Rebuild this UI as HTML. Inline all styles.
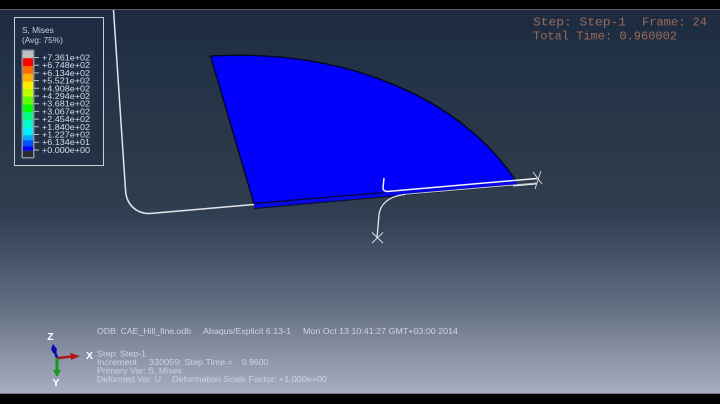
<!DOCTYPE html>
<html><head><meta charset="utf-8"><style>
html,body{margin:0;padding:0;background:#000;width:720px;height:404px;overflow:hidden}
svg{display:block}
text{font-family:"Liberation Sans",sans-serif}
</style></head><body>
<svg width="720" height="404" viewBox="0 0 720 404" xmlns="http://www.w3.org/2000/svg">
<defs>
<linearGradient id="bg" x1="0" y1="10" x2="0" y2="394" gradientUnits="userSpaceOnUse">
<stop offset="0" stop-color="#1d2a40"/>
<stop offset=".14" stop-color="#223247"/>
<stop offset=".36" stop-color="#2b3848"/>
<stop offset=".53" stop-color="#2f3e50"/>
<stop offset=".68" stop-color="#4d5a71"/>
<stop offset=".8" stop-color="#6c7689"/>
<stop offset=".9" stop-color="#8b93a7"/>
<stop offset="1" stop-color="#a8aec0"/>
</linearGradient>
<filter id="b" x="-5%" y="-5%" width="110%" height="110%"><feGaussianBlur stdDeviation="0.35"/></filter>
</defs>
<rect width="720" height="404" fill="#000"/>
<rect y="10" width="720" height="384" fill="url(#bg)"/>
<rect y="9" width="720" height="1" fill="#5a5f66"/>
<rect y="393" width="720" height="1" fill="#777c88"/>

<!-- Part -->
<path d="M210.500 56 Q240 54.500 265 56 C370 62 465 105 516 181 L385 193 L254 204 Z" fill="#0000fb" stroke="#03051a" stroke-width="1.300" stroke-linejoin="round"/>
<path d="M254 203.500 L516 180.500 L517 184.500 L254.500 208.500 Z" fill="#0808e0"/>
<path d="M254 203.500 L383 192.500" stroke="#05062a" stroke-width="1.200" fill="none"/>
<path d="M254.500 208.500 L400 195.500 L515 185" stroke="#0a0f30" stroke-width="1" fill="none"/>

<!-- Left tool -->
<path d="M113.500 10 L125.500 190 C126 204 136 214 150 213.500 L254 204.500" fill="none" stroke="#e2e6ea" stroke-width="1.500"/>
<!-- Punch -->
<path d="M384 178 L383 188 Q383 191 387 191.500 L537 178.500" fill="none" stroke="#f2f4f6" stroke-width="1.500"/>
<path d="M403 194.500 L537 183" fill="none" stroke="#c5cace" stroke-width="1"/>
<path d="M513 186 L536 184" fill="none" stroke="#eef1f4" stroke-width="1"/>
<!-- Lower curve -->
<path d="M405 194.500 C388 196 380 205 379 215 L377 238" fill="none" stroke="#e4e8ea" stroke-width="1.300"/>
<path d="M372 232.500 L383 243 M383 232.500 L372 243" stroke="#dfe3e6" stroke-width="0.900"/>
<path d="M533 172 L542 184 M541 171 L535 189" stroke="#dfe3e6" stroke-width="0.900"/>

<!-- Legend -->
<rect x="14.500" y="17.500" width="89" height="148" fill="#1f2c43" fill-opacity=".55" stroke="#c9ced6" stroke-width="1"/>
<g filter="url(#b)" fill="#c6ccd6" font-size="8.300">
<text x="22" y="33">S, Mises</text>
<text x="22" y="43">(Avg: 75%)</text>
</g>
<rect x="21.500" y="49.500" width="13" height="109" fill="#8b909a"/>
<g>
<rect x="23" y="51" width="10" height="7.300" fill="#c0c0c0"/>
<rect x="23" y="58.300" width="10" height="7.700" fill="#ff0000"/>
<rect x="23" y="66" width="10" height="7.700" fill="#ff6a00"/>
<rect x="23" y="73.700" width="10" height="7.700" fill="#ffae00"/>
<rect x="23" y="81.400" width="10" height="7.700" fill="#ffee00"/>
<rect x="23" y="89.100" width="10" height="7.700" fill="#c0ff00"/>
<rect x="23" y="96.800" width="10" height="7.700" fill="#60ff00"/>
<rect x="23" y="104.500" width="10" height="7.700" fill="#00ff00"/>
<rect x="23" y="112.200" width="10" height="7.700" fill="#00ff80"/>
<rect x="23" y="119.900" width="10" height="7.700" fill="#00ffc8"/>
<rect x="23" y="127.600" width="10" height="7.700" fill="#00f0ff"/>
<rect x="23" y="135.300" width="10" height="5" fill="#00aaff"/>
<rect x="23" y="140.300" width="10" height="6" fill="#0050ff"/>
<rect x="23" y="146.300" width="10" height="4.500" fill="#0000ff"/>
<rect x="23" y="151" width="10" height="6" fill="#2b2b2b"/>
</g>
<path d="M34 57.500H39M34 65.200H39M34 72.900H39M34 80.600H39M34 88.300H39M34 96H39M34 103.700H39M34 111.400H39M34 119.100H39M34 126.800H39M34 134.500H39M34 142.200H39M34 150H39" stroke="#b9bfc9" stroke-width="1"/>
<g filter="url(#b)" fill="#d6dbe4" font-size="8.300">
<text x="42" y="60.500" textLength="48" lengthAdjust="spacingAndGlyphs">+7.361e+02</text>
<text x="42" y="68.200" textLength="48" lengthAdjust="spacingAndGlyphs">+6.748e+02</text>
<text x="42" y="75.900" textLength="48" lengthAdjust="spacingAndGlyphs">+6.134e+02</text>
<text x="42" y="83.600" textLength="48" lengthAdjust="spacingAndGlyphs">+5.521e+02</text>
<text x="42" y="91.300" textLength="48" lengthAdjust="spacingAndGlyphs">+4.908e+02</text>
<text x="42" y="99" textLength="48" lengthAdjust="spacingAndGlyphs">+4.294e+02</text>
<text x="42" y="106.700" textLength="48" lengthAdjust="spacingAndGlyphs">+3.681e+02</text>
<text x="42" y="114.400" textLength="48" lengthAdjust="spacingAndGlyphs">+3.067e+02</text>
<text x="42" y="122.100" textLength="48" lengthAdjust="spacingAndGlyphs">+2.454e+02</text>
<text x="42" y="129.800" textLength="48" lengthAdjust="spacingAndGlyphs">+1.840e+02</text>
<text x="42" y="137.500" textLength="48" lengthAdjust="spacingAndGlyphs">+1.227e+02</text>
<text x="42" y="145.200" textLength="48" lengthAdjust="spacingAndGlyphs">+6.134e+01</text>
<text x="42" y="153" textLength="48" lengthAdjust="spacingAndGlyphs">+0.000e+00</text>
</g>

<!-- Top right status -->
<g filter="url(#b)" fill="#9a6b57">
<text x="533" y="25.500" style="font-family:'Liberation Mono',monospace;font-size:11.500px" textLength="93" lengthAdjust="spacingAndGlyphs">Step: Step-1</text>
<text x="642" y="25.500" style="font-family:'Liberation Mono',monospace;font-size:11.500px" textLength="65" lengthAdjust="spacingAndGlyphs">Frame: 24</text>
<text x="533" y="39.500" style="font-family:'Liberation Mono',monospace;font-size:11.500px" textLength="144" lengthAdjust="spacingAndGlyphs">Total Time: 0.960002</text>
</g>

<!-- Bottom info -->
<g filter="url(#b)" fill="#cfd3df" font-size="8.300">
<text x="97" y="334" textLength="94" lengthAdjust="spacingAndGlyphs">ODB: CAE_Hill_fine.odb</text>
<text x="203" y="334" textLength="88" lengthAdjust="spacingAndGlyphs">Abaqus/Explicit 6.13-1</text>
<text x="303" y="334" textLength="155" lengthAdjust="spacingAndGlyphs">Mon Oct 13 10:41:27 GMT+03:00 2014</text>
<text x="97" y="356.500" textLength="49" lengthAdjust="spacingAndGlyphs">Step: Step-1</text>
<text x="97" y="365" textLength="40" lengthAdjust="spacingAndGlyphs">Increment</text>
<text x="149" y="365" textLength="84" lengthAdjust="spacingAndGlyphs">330059: Step Time =</text>
<text x="242" y="365" textLength="26" lengthAdjust="spacingAndGlyphs">0.9600</text>
<text x="97" y="373.500" textLength="85" lengthAdjust="spacingAndGlyphs">Primary Var: S, Mises</text>
<text x="97" y="382" textLength="64" lengthAdjust="spacingAndGlyphs">Deformed Var: U</text>
<text x="172" y="382" textLength="155" lengthAdjust="spacingAndGlyphs">Deformation Scale Factor: +1.000e+00</text>
</g>

<!-- Triad -->
<path d="M57 358 L54 349" stroke="#0a0ab0" stroke-width="2.500"/>
<path d="M51 349 L53 344 L57 349 L56 353 L53 353 Z" fill="#0a0ab0"/>
<path d="M57 358 V372" stroke="#149a1c" stroke-width="3"/>
<path d="M53 370 H61 L57 377 Z" fill="#149a1c"/>
<path d="M58 358 L72 356.500" stroke="#b01818" stroke-width="2.600"/>
<path d="M70 353 L80 356 L71 360 Z" fill="#b01818"/>
<g fill="#fff" font-weight="700" font-size="10.500" text-anchor="middle">
<text x="50.500" y="340">Z</text>
<text x="89.500" y="359">X</text>
<text x="56" y="386">Y</text>
</g>
</svg>
</body></html>
